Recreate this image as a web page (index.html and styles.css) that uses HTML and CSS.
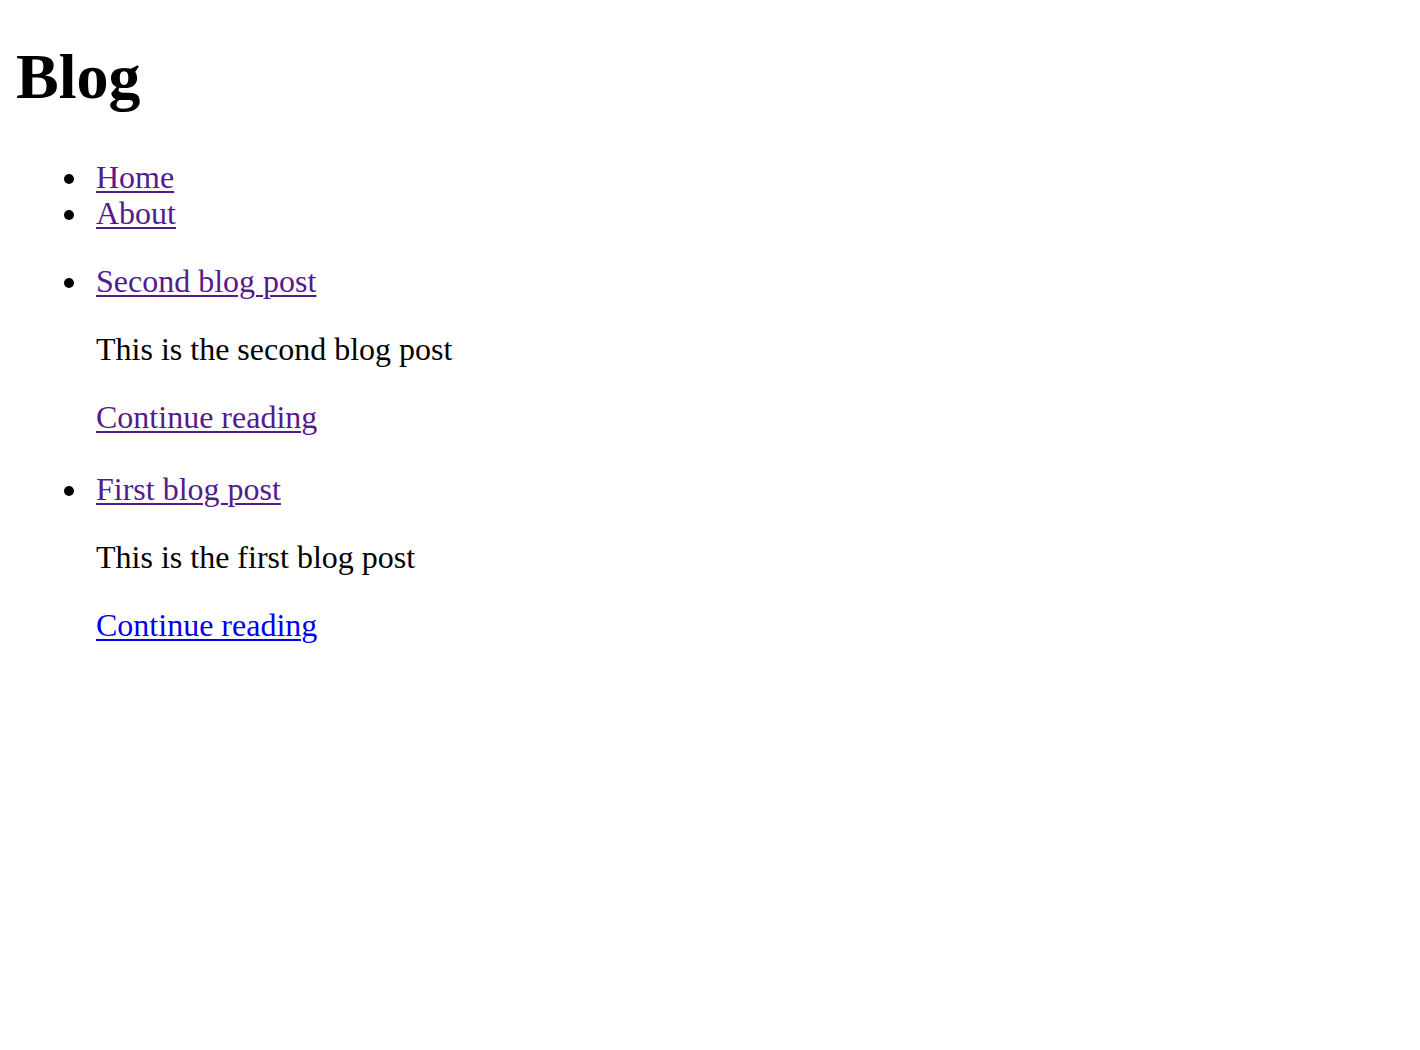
FILE: index.html
```html
<!DOCTYPE html>
<html>
<head>
<meta charset="utf-8">
<title>Blog</title>
<link rel="stylesheet" href="styles.css">
</head>
<body class="page">
<h1 class="title">Blog</h1>
<ul class="list">
  <li class="item"><a class="link visited" href="#">Home</a></li>
  <li class="item"><a class="link visited" href="#">About</a></li>
</ul>
<ul class="list posts">
  <li class="item post"><a class="link visited" href="#">Second blog post</a>
    <p class="para">This is the second blog post</p>
    <p class="para"><a class="link visited" href="#">Continue reading</a></p>
  </li>
  <li class="item post"><a class="link visited" href="#">First blog post</a>
    <p class="para">This is the first blog post</p>
    <p class="para"><a class="link fresh" href="#">Continue reading</a></p>
  </li>
</ul>
</body>
</html>
```
FILE: styles.css
```css
.page {
  margin: 16px;
  font-family: "Liberation Serif", "Times New Roman", serif;
  font-size: 32px;
  line-height: 36px;
  color: #000;
  background: #fff;
}
.title {
  font-size: 64px;
  line-height: 74px;
  font-weight: bold;
  margin: 24px 0 45px;
}
.list {
  margin: 32px 0;
  padding-left: 80px;
  list-style: none;
}
.item::before {
  content: "";
  display: inline-block;
  width: 10px;
  height: 10px;
  border-radius: 50%;
  background: #000;
  margin-left: -32px;
  margin-right: 22px;
  vertical-align: 4px;
}
.post + .post {
  margin-top: 36px;
}
.para {
  margin: 32px 0;
}
.link {
  text-decoration: underline;
  text-decoration-thickness: 2px;
  text-underline-offset: 3px;
}
.visited { color: #551a8b; }
.fresh { color: #0000ee; }
```
